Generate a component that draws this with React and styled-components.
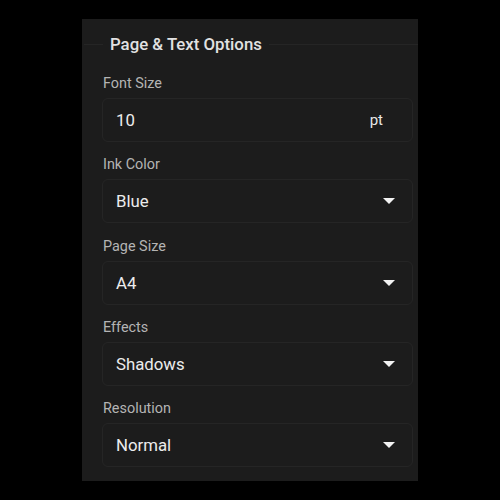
import React from "react";
import styled, { createGlobalStyle } from "styled-components";

const GlobalStyle = createGlobalStyle`
  html, body {
    margin: 0;
    padding: 0;
    background: #000;
    font-family: Roboto, "Liberation Sans", sans-serif;
  }
`;

const Page = styled.div`
  width: 500px;
  height: 500px;
  padding: 19px 0 0 82px;
  box-sizing: border-box;
`;

const Panel = styled.div`
  width: 336px;
  height: 462px;
  background: #1c1c1c;
  box-sizing: border-box;
  display: flex;
  flex-direction: column;
`;

const Header = styled.div`
  height: 50px;
  display: flex;
  align-items: center;
  gap: 7px;
  padding-left: 2px;

  &::before,
  &::after {
    content: "";
    height: 1px;
    background: #252525;
  }
  &::before {
    width: 19px;
  }
  &::after {
    flex: 1;
  }
`;

const Title = styled.span`
  color: #e2e2e2;
  font-size: 16.8px;
  font-weight: 500;
`;

const Fields = styled.div`
  display: flex;
  flex-direction: column;
  gap: 11.25px;
  padding: 3px 5px 0 20px;
`;

const Field = styled.div`
  display: flex;
  flex-direction: column;
  gap: 5px;
`;

const Label = styled.div`
  color: #b4b4b4;
  font-size: 14.4px;
  line-height: 18px;
  padding: 3px 0 0 1px;
`;

const Box = styled.div`
  height: 44px;
  box-sizing: border-box;
  border: 1px solid #252525;
  border-radius: 6px;
  display: flex;
  align-items: center;
  padding: 0 17px 0 13px;
  color: #ececec;
  font-size: 16.8px;
`;

const Value = styled.span`
  flex: 1;
`;

const Unit = styled.span`
  font-size: 15px;
  margin-right: 12px;
  color: #e6e6e6;
`;

const Caret = styled.span`
  width: 0;
  height: 0;
  border-left: 6px solid transparent;
  border-right: 6px solid transparent;
  border-top: 6px solid #f2f2f2;
`;

const selects = [
  { label: "Ink Color", value: "Blue" },
  { label: "Page Size", value: "A4" },
  { label: "Effects", value: "Shadows" },
  { label: "Resolution", value: "Normal" },
];

export default function App() {
  return (
    <>
      <GlobalStyle />
      <Page>
        <Panel>
          <Header>
            <Title>Page &amp; Text Options</Title>
          </Header>
          <Fields>
            <Field>
              <Label>Font Size</Label>
              <Box>
                <Value>10</Value>
                <Unit>pt</Unit>
              </Box>
            </Field>
            {selects.map((s) => (
              <Field key={s.label}>
                <Label>{s.label}</Label>
                <Box>
                  <Value>{s.value}</Value>
                  <Caret />
                </Box>
              </Field>
            ))}
          </Fields>
        </Panel>
      </Page>
    </>
  );
}
